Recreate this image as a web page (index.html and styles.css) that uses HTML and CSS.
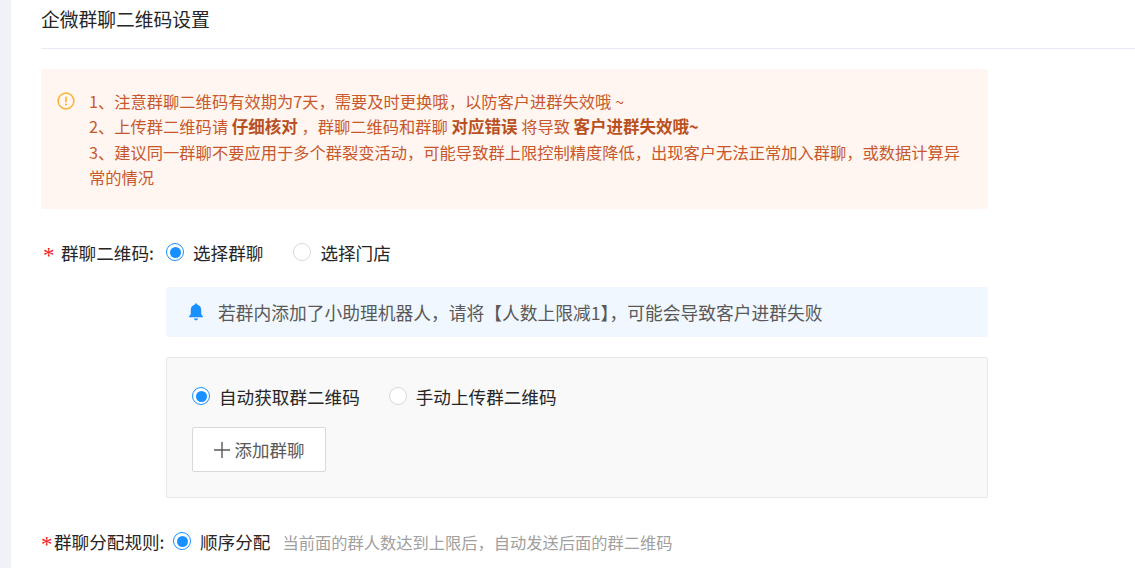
FILE: index.html
```html
<!DOCTYPE html>
<html lang="zh-CN">
<head>
<meta charset="utf-8">
<title>企微群聊二维码设置</title>
<link rel="stylesheet" href="styles.css">
</head>
<body>
<div class="page">
  <aside class="rail"></aside>
  <main class="content">
    <h1 class="title">企微群聊二维码设置</h1>
    <section class="warning">
      <svg class="warn-icon" viewBox="0 0 18 18" width="18" height="18" aria-hidden="true">
        <circle cx="9" cy="9" r="7.9" fill="none" stroke="#fbb032" stroke-width="1.5"/>
        <rect x="8.2" y="4.4" width="1.6" height="6" rx=".6" fill="#fbb032"/>
        <circle cx="9" cy="12.6" r="1" fill="#fbb032"/>
      </svg>
      <div class="warn-text">
        <p>1、注意群聊二维码有效期为7天，需要及时更换哦，以防客户进群失效哦 ~</p>
        <p>2、上传群二维码请 <b>仔细核对</b> ，群聊二维码和群聊 <b>对应错误</b> 将导致 <b>客户进群失效哦~</b></p>
        <p>3、建议同一群聊不要应用于多个群裂变活动，可能导致群上限控制精度降低，出现客户无法正常加入群聊，或数据计算异常的情况</p>
      </div>
    </section>

    <div class="field field-qr">
      <span class="req">*</span>
      <label class="label">群聊二维码:</label>
      <div class="radio-row">
        <span class="radio on"></span><span class="radio-text gap-a">选择群聊</span>
        <span class="radio"></span><span class="radio-text">选择门店</span>
      </div>
    </div>

    <div class="tip">
      <svg class="bell" viewBox="0 0 16 18" width="16" height="18" aria-hidden="true">
        <path d="M8 0.6c.8 0 1.3.5 1.4 1.2 2.5.6 3.8 2.6 3.8 5.2v3.6c0 1 .6 1.7 1.6 2.7.4.4.2 1-.4 1H1.6c-.6 0-.8-.6-.4-1 1-1 1.6-1.7 1.6-2.7V7c0-2.6 1.3-4.6 3.8-5.2C6.7 1.1 7.2.6 8 .6z" fill="#1890ff"/>
        <path d="M5.9 15.4h4.2c-.2 1.1-1 1.8-2.1 1.8s-1.9-.7-2.1-1.8z" fill="#1890ff"/>
      </svg>
      <span>若群内添加了小助理机器人，请将【人数上限减1】，可能会导致客户进群失败</span>
    </div>

    <div class="panel">
      <div class="radio-row panel-row">
        <span class="radio on"></span><span class="radio-text gap-b">自动获取群二维码</span>
        <span class="radio"></span><span class="radio-text">手动上传群二维码</span>
      </div>
      <button class="add" type="button">
        <svg viewBox="0 0 16 16" width="16" height="16" aria-hidden="true"><path d="M8 0v16M0 8h16" stroke="#595959" stroke-width="1.4" fill="none"/></svg>
        <span>添加群聊</span>
      </button>
    </div>

    <div class="field field-rule">
      <span class="req tight">*</span>
      <label class="label">群聊分配规则:</label>
      <span class="radio on"></span><span class="radio-text">顺序分配</span>
      <span class="hint">当前面的群人数达到上限后，自动发送后面的群二维码</span>
    </div>
  </main>
</div>
</body>
</html>
```

FILE: styles.css
```css
* { box-sizing: border-box; }
html, body { margin: 0; height: 100%; overflow: hidden; background: #fff; }
body {
  font-family: "Noto Sans CJK SC", "Liberation Sans", sans-serif;
  color: #262626;
}
.page { display: flex; height: 568px; }
.rail { flex: 0 0 11px; background: #f0f2f7; }
.content { flex: 1; min-width: 0; padding-left: 30px; }
.title {
  margin: 0;
  height: 49px;
  padding-top: 5px;
  font-size: 18.75px;
  line-height: 27px;
  font-weight: 400;
  color: #262626;
  border-bottom: 1px solid #e8eaf3;
}
.warning {
  display: flex;
  width: 947px;
  height: 140px;
  margin-top: 20px;
  padding: 20px 16px 0 16px;
  background: #fff6f1;
  border-radius: 3px;
}
.warn-icon { flex: none; margin: 3px 0 0 0; }
.warn-text {
  margin-left: 14px;
  width: 880px;
  font-size: 16.28px;
  line-height: 25.4px;
  color: #c8582c;
}
.warn-text p { margin: 0; }
.warn-text b { color: #b9501f; font-weight: 700; font-size: 16.5px; }
.field { display: flex; align-items: center; }
.field-qr { margin-top: 30px; height: 28px; }
.req {
  font-family: "Liberation Serif", serif;
  color: #f5222d;
  font-size: 23px;
  width: 20px;
  padding: 3px 0 0 2px;
  line-height: 28px;
  height: 28px;
}
.req.tight { width: 13px; padding-left: 0; }
.label { font-size: 17.6px; line-height: 28px; color: #262626; width: 105px; white-space: nowrap; }
.field-rule .label { width: 119px; }
.radio-row { display: flex; align-items: center; }
.radio {
  flex: none;
  width: 18px;
  height: 18px;
  border: 1px solid #d9d9d9;
  border-radius: 50%;
  background: #fff;
  position: relative;
  top: -1px;
}
.radio.on { border-color: #1890ff; }
.radio.on::after {
  content: "";
  position: absolute;
  left: 2.5px;
  top: 2.5px;
  width: 11px;
  height: 11px;
  border-radius: 50%;
  background: #1890ff;
}
.radio-text { font-size: 17.6px; line-height: 28px; color: #262626; margin-left: 9px; white-space: nowrap; }
.gap-a { margin-right: 30px; }
.gap-b { margin-right: 29px; }
.tip {
  display: flex;
  align-items: center;
  width: 822px;
  height: 50px;
  margin: 20px 0 0 125px;
  padding-left: 22px;
  background: #f0f7fe;
  border-radius: 3px;
  font-size: 17.75px;
  color: #595959;
}
.bell { margin-right: 14px; flex: none; }
.panel {
  width: 822px;
  height: 141px;
  margin: 20px 0 0 125px;
  padding: 25px 25px 0;
  background: #f9f9f9;
  border: 1px solid #e8e8e8;
  border-radius: 2px;
}
.panel-row { height: 28px; }
.add {
  display: flex;
  align-items: center;
  justify-content: center;
  gap: 5px;
  width: 134px;
  height: 45px;
  margin-top: 16px;
  padding: 0;
  background: #fff;
  border: 1px solid #d9d9d9;
  border-radius: 2px;
  font: inherit;
  font-size: 17.5px;
  color: #595959;
}
.field-rule { margin-top: 30px; height: 28px; }
.hint { font-size: 16.25px; color: #a0a0a0; margin-left: 12px; white-space: nowrap; }
```
